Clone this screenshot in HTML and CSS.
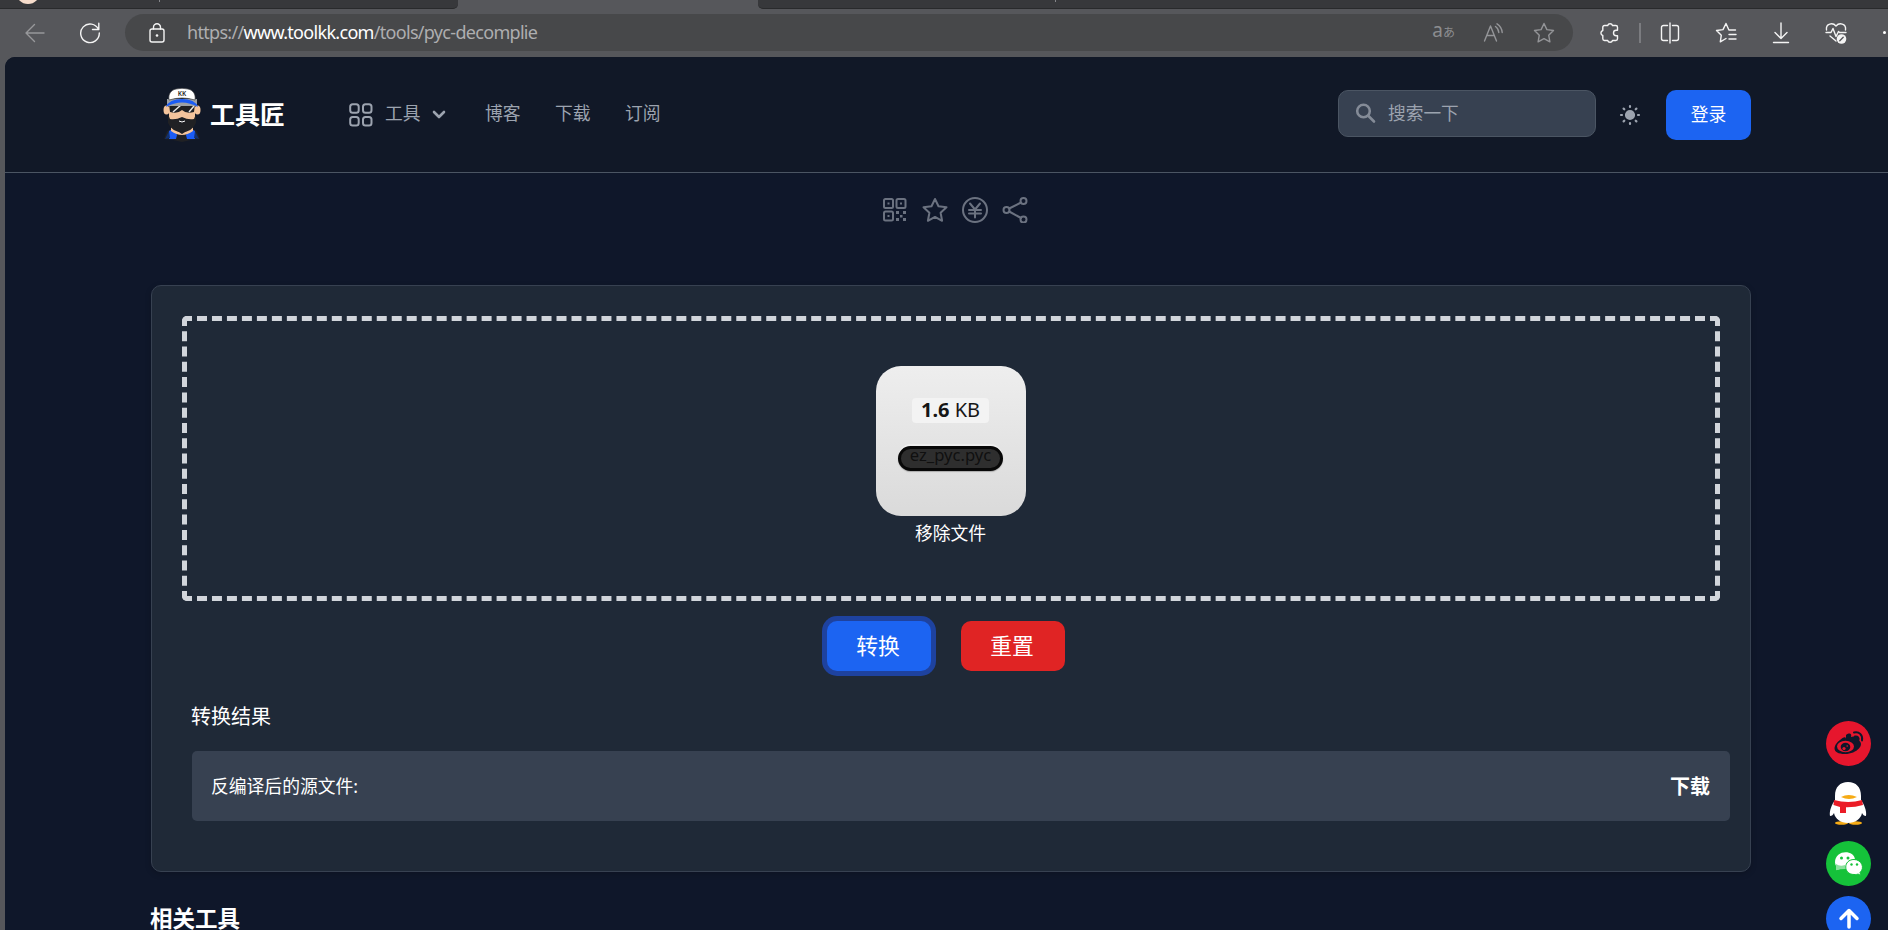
FILE: index.html
```html
<!DOCTYPE html>
<html lang="zh-CN">
<head>
<meta charset="utf-8">
<title>工具匠</title>
<link rel="stylesheet" href="styles.css">
</head>
<body>
<div class="browser">
  <div class="tabs">
    <div class="tab tab-left"><span class="avatar"></span><span class="tick"></span></div>
    <div class="tab-active"></div>
    <div class="tab tab-right"><span class="tick"></span></div>
  </div>
  <div class="toolbar">
    <svg class="ic back" width="22" height="20" viewBox="0 0 22 20"><path d="M20 10H2M10.500 1.500L2 10l8.500 8.500"/></svg>
    <svg class="ic reload" width="22" height="22" viewBox="0 0 22 22"><path d="M19.500 7.500A9.300 9.300 0 1 0 20.300 11M19.800 1.200V7.500H13.500"/></svg>
    <div class="address">
      <svg class="ic lock" width="18" height="20" viewBox="0 0 18 20"><rect x="2" y="6" width="14" height="13" rx="2"/><path d="M5.500 6V4.200a3.500 3.500 0 0 1 7 0V6"/><circle class="fill" cx="9" cy="12.500" r="1.300"/></svg>
      <div class="url">https://<b>www.toolkk.com</b>/tools/pyc-decomplie</div>
      <div class="address-actions">
        <span class="translate">a<small>あ</small></span>
        <svg class="ic" width="22" height="20" viewBox="0 0 22 20"><path d="M1.500 18L7.500 3l6 15M3.800 12.500h7.500M12.500 3.500q3 2 3.300 6M14 .8q4.800 3 5.200 8.700"/></svg>
        <svg class="ic" width="22" height="22" viewBox="0 0 22 22"><path d="M11 1.500l2.900 6.100 6.600.9-4.800 4.700 1.200 6.600-5.900-3.200-5.900 3.200 1.200-6.600L1.500 8.500l6.600-.9z"/></svg>
      </div>
    </div>
    <div class="browser-actions">
      <svg class="ic a1" width="22" height="22" viewBox="0 0 22 22"><path d="M6.500 3.500h2.200a2.500 2.500 0 0 1 4.800 0h3.300a1.700 1.700 0 0 1 1.700 1.700v3.100h-1.300a2.700 2.700 0 0 0 0 5.400h1.300v3.100a1.700 1.700 0 0 1-1.700 1.700h-3.300a2.500 2.500 0 0 1-4.800 0H5.500a1.700 1.700 0 0 1-1.700-1.700v-3.300a2.600 2.600 0 0 1 0-5V5.200a1.700 1.700 0 0 1 1.700-1.700z"/></svg>
      <i class="rule"></i>
      <svg class="ic a2" width="20" height="22" viewBox="0 0 20 22"><path d="M7.500 3.500h-4a2 2 0 0 0-2 2v11a2 2 0 0 0 2 2h4M12.500 3.500h4a2 2 0 0 1 2 2v11a2 2 0 0 1-2 2h-4M10 1v20"/></svg>
      <svg class="ic a3" width="22" height="22" viewBox="0 0 22 22"><path d="M20.500 8h-6.600L11 1.500 8 7.600l-6.500.9 4.800 4.700-1 6.600L11 16.500M14 12.500h7M14 17h7"/></svg>
      <svg class="ic a4" width="18" height="22" viewBox="0 0 18 22"><path d="M9 1v15M3 10.500l6 6 6-6M1.500 20.500h15"/></svg>
      <svg class="ic a5" width="22" height="22" viewBox="0 0 22 22"><path d="M1.500 8C.5 1 8 .5 11 4c3-3.500 10.500-3 9.500 4M1 10.500h5l2-4 3 8 2.500-5 1 1H21M5 14l6 5"/><circle class="fill" cx="16.500" cy="17" r="4.800"/><path class="cut" d="M14.800 18.700l3.400-3.400"/></svg>
      <i class="more"></i>
    </div>
  </div>
  <div class="page">
    <header>
      <div class="wrap head">
        <svg class="logo" width="38" height="54" viewBox="0 0 38 54">
          <path fill="#202124" d="M4 43l7-3h16l7 3 3 8-9 1-9 2-9-2-9-1z"/>
          <path fill="#1b5cf5" d="M6 43l5-3 3 7-1 4H6zM32 43l-5-3-4 7 1 4h8z"/><path fill="#12316f" d="M6 43l1 7-5 1zM32 43l-1 7 5 1z"/>
          <path fill="#f4c49c" d="M8 39l11 7 11-7v4q-11 8-22 0z"/>
          <ellipse cx="3.500" cy="22" rx="3" ry="4.500" fill="#f4c49c"/><ellipse cx="34.500" cy="22" rx="3" ry="4.500" fill="#f4c49c"/>
          <path fill="#f4c49c" d="M6 14h26v20H6z"/>
          <path fill="#202124" d="M5 26l2 5q6 1 12-2 6 3 12 2l2-5v9q-4 9-14 9T5 35z"/>
          <path fill="#202124" d="M6 16q13-3 26 0l-1 8q-8 2-12-2-4 4-12 2z"/>
          <path stroke="#e5e5e5" stroke-width="1.500" d="M10 24l8-7M26 24l5-6"/><path stroke="#fff" d="M16 33q3 2 6 0" fill="none"/>
          <path fill="#9ca0a5" d="M4 11h30v7H4z"/>
          <path fill="#1b5cf5" d="M3 19q3-8 16-8t16 8q-16-9-32 0z"/>
          <path fill="#fff" stroke="#36383c" stroke-width=".7" d="M6 12C5 6 8 2 13 1q6-1.500 12 0c5 1 8 5 7 11q-13-4-26 0z"/>
          <text x="19" y="8.200" text-anchor="middle" class="kk">KK</text>
        </svg>
        <strong class="brand">工具匠</strong>
        <nav>
          <a class="tools"><svg class="grid" width="24" height="24" viewBox="0 0 24 24"><rect x="1.200" y="1.200" width="8.500" height="8.500" rx="2.500"/><rect x="14" y="1.200" width="8.500" height="8.500" rx="2.500"/><rect x="1.200" y="14" width="8.500" height="8.500" rx="2.500"/><rect x="14" y="14" width="8.500" height="8.500" rx="2.500"/></svg><span>工具</span><svg class="chev" width="14" height="10" viewBox="0 0 14 10"><path d="M2 2l5 5 5-5"/></svg></a>
          <a>博客</a><a>下载</a><a>订阅</a>
        </nav>
        <div class="search"><svg width="22" height="22" viewBox="0 0 22 22"><circle cx="8.500" cy="9" r="6.300"/><path d="M13.500 14l5.500 5.500"/></svg><span>搜索一下</span></div>
        <svg class="sun" width="22" height="22" viewBox="0 0 22 22"><circle cx="11" cy="11" r="4"/><path d="M11 2v1M11 19v1M2 11h1M19 11h1M4.600 4.600l.7.700M16.700 16.700l.7.700M4.600 17.400l.7-.7M16.700 5.300l.7-.7"/></svg>
        <a class="login">登录</a>
      </div>
    </header>
    <main class="wrap">
      <div class="actions">
        <svg width="26" height="26" viewBox="0 0 26 26"><g><rect x="2" y="2" width="9" height="9" rx="1.500"/><rect x="14.500" y="2" width="9" height="9" rx="1.500"/><rect x="2" y="14.500" width="9" height="9" rx="1.500"/></g><path class="dots" d="M5.500 5.500h2v2h-2zM18 5.500h2v2h-2zM5.500 18h2v2h-2zM14 14h3v3h-3zM21 14h3v3h-3zM18 18h2.500v2.500H18zM14 21h3v3h-3zM21 21h3v3h-3z"/></svg>
        <svg width="26" height="26" viewBox="0 0 26 26"><path d="M13 2l3.500 7.300 8 1-5.900 5.500 1.500 8L13 19.900l-7.100 3.900 1.500-8-5.900-5.500 8-1z"/></svg>
        <svg width="26" height="26" viewBox="0 0 26 26"><circle cx="13" cy="13" r="12"/><path d="M8 6.500l5 6 5-6M7 13h12M7 16.500h12M13 13v7.500"/></svg>
        <svg width="26" height="26" viewBox="0 0 26 26"><circle cx="4.500" cy="13" r="3"/><circle cx="21.500" cy="4" r="3"/><circle cx="21.500" cy="22.500" r="3"/><path d="M7.200 11.500L19 5.500M7.200 14.500L19 21"/></svg>
      </div>
      <section class="card">
        <div class="drop">
          <div class="file"><div class="size"><b>1.6</b> KB</div><div class="name"><span>ez_pyc.pyc</span></div></div>
          <a class="remove">移除文件</a>
        </div>
        <div class="buttons"><button class="convert">转换</button><button class="reset">重置</button></div>
        <div class="result-title">转换结果</div>
        <div class="result"><span>反编译后的源文件:</span><b>下载</b></div>
      </section>
      <h2>相关工具</h2>
    </main>
  </div>
</div>
<aside class="float">
  <svg width="45" height="45" viewBox="0 0 45 45"><circle cx="22.500" cy="22.500" r="22.500" fill="#e6162d"/><path fill="#10172a" d="M20 14c4-3 6-1 5 2 6-2 8 0 7 3 8 4-1 14-13 14-14 0-12-9-5-14 3-3 6-4 6-1z"/><ellipse cx="19.500" cy="25.500" rx="8.500" ry="5.800" fill="#e6162d"/><ellipse cx="19.500" cy="26" rx="4.800" ry="4.200" fill="#10172a"/><circle cx="18" cy="27.500" r="1.600" fill="#e6162d"/><circle cx="21.200" cy="25" r=".8" fill="#e6162d"/><path fill="none" stroke="#10172a" stroke-width="2" stroke-linecap="round" d="M28 11.500c5-1.500 9 2.500 8 8M29 15.500c3-.5 4 1.500 3.500 3.500"/></svg>
  <svg class="qq" width="45" height="45" viewBox="0 0 45 45"><ellipse cx="15.500" cy="42" rx="6.500" ry="1.800" fill="#f6ab15"/><ellipse cx="29.500" cy="42" rx="6.500" ry="1.800" fill="#f6ab15"/><path fill="#fff" d="M22 1C14 1 9 6 9 15v4c-3 4-6 11-5 16 2 0 3-1 4-3 1 6 7 10 14 10s13-4 14-10c1 2 2 3 4 3 1-5-2-12-5-16v-4c0-9-5-14-13-14z"/><path fill="#f6ab15" d="M15 16q7.500-4 16 0-8 4-16 0z"/><path fill="#eb1c26" d="M8 19q14.500 4 28 0l1 5q-8 2.500-17 2.300V32h-6v-6l-6.500-2z"/></svg>
  <svg width="45" height="45" viewBox="0 0 45 45"><circle cx="22.500" cy="22.500" r="22.500" fill="#15c23a"/><path fill="#fff" d="M9 21.500c0-13 19-13 20-3-7 0-10 4-9 9l-6 .5-4 1 1-3q-2-2-2-4.500z"/><path fill="#8be09d" d="M10 23q4 3 9 1 0 3 1 4l-6 .2-4 1z"/><path fill="#fff" stroke="#15c23a" d="M28 18.500c-11 0-11 15 0 15 2 0 3 0 4-.5l3 1.500-1-3c5-4 2-13-6-13z"/><g fill="#15c23a"><circle cx="15.500" cy="17" r="1.500"/><circle cx="22" cy="17" r="1.500"/><circle cx="25.500" cy="23.500" r="1.200"/><circle cx="31" cy="23.500" r="1.200"/></g></svg>
  <svg class="up" width="45" height="45" viewBox="0 0 45 45"><circle cx="22.500" cy="22.500" r="22.500" fill="#1c64f2"/><path fill="none" stroke="#fff" stroke-width="3.500" stroke-linecap="round" stroke-linejoin="round" d="M23 31V15M15 22.500l8-8 8 8"/></svg>
</aside>
</body>
</html>
```
FILE: styles.css
```css
* { box-sizing: border-box; }
body { margin: 0; height: 930px; overflow: hidden; background: #56575b; font-family: "Noto Sans", "Noto Sans CJK SC", sans-serif; color: #fff; }
svg { display: block; flex: none; }
.browser { height: 930px; display: flex; flex-direction: column; }
.tabs { height: 9px; display: flex; flex: none; overflow: hidden; }
.tab { background: #37383b; border-bottom: 1px solid #292a2c; display: flex; align-items: flex-start; }
.tab-left { width: 458px; border-radius: 0 0 5px 0; }
.tab-active { width: 300px; }
.tab-right { flex: 1; border-radius: 0 0 0 5px; padding-left: 297px; }
.avatar { width: 24px; height: 24px; border-radius: 50%; background: #f6dccb; margin: -20px 0 0 16px; }
.tick { width: 1px; height: 2px; background: #85868a; }
.tab-left .tick { margin-left: 119px; }

.toolbar { height: 48px; flex: none; display: flex; align-items: center; padding: 0 0 1px 24px; }
.ic { fill: none; stroke: #f4f4f4; stroke-width: 1.4; stroke-linecap: round; stroke-linejoin: round; }
.ic .fill { fill: #f4f4f4; stroke: none; }
.ic .cut { stroke: #56575b; }
.back { stroke: #97989b; }
.reload { margin-left: 33px; }
.address { margin-left: 24px; width: 1448px; height: 37px; border-radius: 19px; background: #47484a; display: flex; align-items: center; padding: 0 18px 0 23px; }
.url { margin: 0 0 2px 21px; font-size: 18px; line-height: 24px; letter-spacing: -.69px; color: #aeaeb0; }
.url b { font-weight: 400; color: #fff; }
.address-actions { margin-left: auto; display: flex; align-items: center; gap: 28px; color: #8c8d90; }
.address-actions .ic { stroke: #949598; }
.translate { font-size: 19px; line-height: 20px; margin-bottom: 3px; }
.translate small { font-size: 12px; }
.browser-actions { display: flex; align-items: center; }
.a1 { margin-left: 26px; }
.rule { width: 2px; height: 20px; background: #7b7c80; margin-left: 18px; }
.a2 { margin-left: 19px; }
.a3 { margin-left: 35px; }
.a4 { margin-left: 35px; }
.a5 { margin-left: 35px; }
.more { width: 3px; height: 3px; border-radius: 50%; background: #fff; margin-left: 36px; }

.page { flex: 1; min-height: 0; margin-left: 5px; overflow: hidden; background: #0f172a; border-radius: 10px 0 0 0; }
header { height: 116px; background: #111827; border-bottom: 1px solid #4b5563; }
.wrap { width: 1600px; margin-left: 146px; }
.head { height: 115px; display: flex; align-items: center; }
.logo { margin: 1px 0 0 12px; }
.kk { font: 600 6.500px "Noto Sans", sans-serif; fill: #222; }
.brand { margin: 0 0 2px 9px; font-size: 25px; line-height: 30px; width: 76px; }
nav { display: flex; gap: 34px; margin-left: 63px; font-size: 17.8px; line-height: 24px; color: #9ca3af; }
nav a { width: 36px; margin-bottom: 3px; }
nav .tools { width: 102px; display: flex; align-items: center; margin-bottom: 0; }
.tools span { width: 36px; margin: 0 0 3px 12px; }
.grid { fill: none; stroke: #9ca3af; stroke-width: 2; }
.chev { fill: none; stroke: #9ca3af; stroke-width: 2.6; stroke-linecap: round; stroke-linejoin: round; margin-left: 11px; }
.search { margin: 0 0 3px auto; width: 258px; height: 47px; display: flex; align-items: center; background: #374151; border: 1px solid #4b5563; border-radius: 10px; padding-left: 16px; font-size: 17.7px; color: #9ca3af; }
.search svg { fill: none; stroke: #848b97; stroke-width: 2.6; stroke-linecap: round; }
.search span { margin: 0 0 2px 11px; }
.sun { margin-left: 23px; fill: #9ca3af; stroke: #9ca3af; stroke-width: 2.2; stroke-linecap: round; }
.login { margin-left: 25px; width: 85px; height: 50px; line-height: 49px; border-radius: 10px; background: #1c64f2; text-align: center; font-size: 17.8px; }

.actions { display: flex; gap: 14px; padding: 24px 0 0 731px; height: 112px; }
.actions svg { fill: none; stroke: #6b7280; stroke-width: 2; stroke-linejoin: round; stroke-linecap: round; }
.actions .dots { fill: #6b7280; stroke: none; }
.card { height: 587px; border: 1px solid #374151; border-radius: 10px; background: #1f2937; padding: 30px; box-shadow: 0 2px 6px rgba(0, 0, 0, .2); }
.drop { height: 285px; border: 5px dashed #d1d5db; border-radius: 5px; padding-top: 45px; display: flex; flex-direction: column; align-items: center; }
.file { width: 150px; height: 150px; border-radius: 25px; background: linear-gradient(#eee, #dadada); color: #161616; display: flex; flex-direction: column; align-items: center; padding: 32px 1px 0 0; }
.size { width: 77px; height: 25px; line-height: 24px; font-size: 20px; text-align: center; white-space: nowrap; background: #f3f3f3; border-radius: 4px; }
.name { width: 105px; height: 25px; margin-top: 23px; background: #2e2e2e; border: 3px solid #080808; border-radius: 13px; font-size: 16.6px; line-height: 12px; text-align: center; color: #101010; box-shadow: 0 1px 1px #aaa, 0 -3px 0 -1px #eee; }
.remove { margin: 4px 1px 0 0; font-size: 17.8px; line-height: 26px; }
.buttons { display: flex; gap: 30px; padding: 20px 0 0 645px; }
button { width: 104px; height: 50px; border: 0; border-radius: 10px; color: #fff; font: 400 21.8px/48px "Noto Sans", "Noto Sans CJK SC", sans-serif; padding: 0 2px 0 0; }
.convert { background: #1c64f2; box-shadow: 0 0 0 5px #1e429f; }
.reset { background: #e02424; }
.result-title { margin: 31px 0 0 9px; font-size: 20px; line-height: 30px; }
.result { margin: 19px 0 0 10px; width: 1538px; height: 70px; border-radius: 5px; background: #374151; display: flex; align-items: center; justify-content: space-between; padding: 0 20px 2px 19px; font-size: 17.8px; }
.result b { font-size: 20px; }
h2 { margin: 29px 0 0 -1px; font-size: 22.5px; line-height: 36px; }

.float { position: absolute; left: 1826px; top: 721px; display: flex; flex-direction: column; gap: 15px; }
.up { margin-top: -5px; }
```
